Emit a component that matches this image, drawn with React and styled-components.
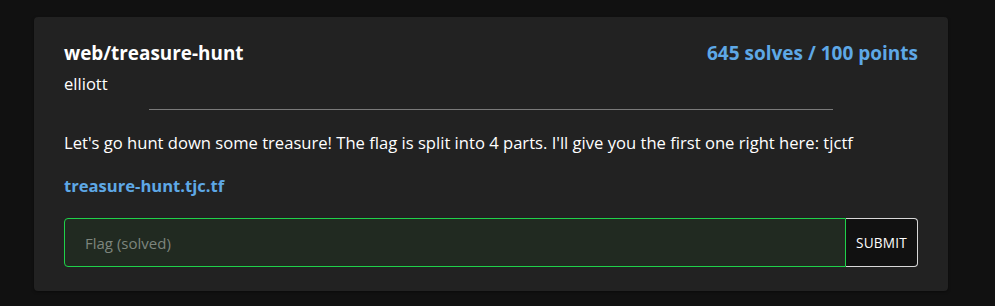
import React from "react";
import styled, { createGlobalStyle } from "styled-components";

const GlobalStyle = createGlobalStyle`
  body {
    margin: 0;
    background: #111111;
    font-family: "Open Sans", "Noto Sans", sans-serif;
    color: #ffffff;
  }
`;

const Page = styled.div`
  padding: 17px 47px 15px 34px;
`;

const Card = styled.div`
  background: #222222;
  border-radius: 4px;
  padding: 23px 30px 24px 30px;
  box-shadow: 0 1px 3px rgba(0, 0, 0, 0.4);
`;

const Header = styled.div`
  display: flex;
  justify-content: space-between;
  align-items: flex-start;
`;

const Title = styled.h2`
  margin: 0;
  font-size: 18.9px;
  font-weight: 700;
  line-height: 26px;
`;

const Author = styled.div`
  margin-top: 7px;
  font-size: 16.6px;
  line-height: 22px;
`;

const Stats = styled.div`
  color: #5ea8e6;
  font-size: 19px;
  font-weight: 700;
  line-height: 26px;
`;

const Rule = styled.hr`
  width: 80%;
  border: none;
  border-top: 1px solid #7a7a7a;
  margin: 14px auto 22px;
`;

const Description = styled.p`
  margin: 0;
  font-size: 16.6px;
  line-height: 22px;
`;

const Link = styled.a`
  display: inline-block;
  margin-top: 21px;
  color: #5ea8e6;
  font-weight: 700;
  font-size: 16.6px;
  line-height: 22px;
  text-decoration: none;
`;

const Form = styled.form`
  display: flex;
  margin-top: 21px;
`;

const FlagInput = styled.input`
  flex: 1;
  min-width: 0;
  height: 49px;
  box-sizing: border-box;
  background: #212a21;
  border: 1px solid #1fd14a;
  border-radius: 4px 0 0 4px;
  padding: 0 20px;
  font-family: inherit;
  font-size: 15px;
  color: #ffffff;
  outline: none;

  &::placeholder {
    color: #7d857d;
  }
`;

const SubmitButton = styled.button`
  height: 49px;
  width: 72px;
  box-sizing: border-box;
  background: #111111;
  color: #ffffff;
  border: 1px solid #d8d8d8;
  border-left: none;
  border-radius: 0 4px 4px 0;
  padding: 0;
  font-family: inherit;
  font-size: 13.6px;
  letter-spacing: 0.2px;
`;

export default function App() {
  return (
    <>
      <GlobalStyle />
      <Page>
        <Card>
          <Header>
            <div>
              <Title>web/treasure-hunt</Title>
              <Author>elliott</Author>
            </div>
            <Stats>645 solves / 100 points</Stats>
          </Header>
          <Rule />
          <Description>
            Let's go hunt down some treasure! The flag is split into 4 parts. I'll
            give you the first one right here: tjctf
          </Description>
          <Link href="#">treasure-hunt.tjc.tf</Link>
          <Form onSubmit={(e) => e.preventDefault()}>
            <FlagInput placeholder="Flag (solved)" />
            <SubmitButton type="submit">SUBMIT</SubmitButton>
          </Form>
        </Card>
      </Page>
    </>
  );
}
